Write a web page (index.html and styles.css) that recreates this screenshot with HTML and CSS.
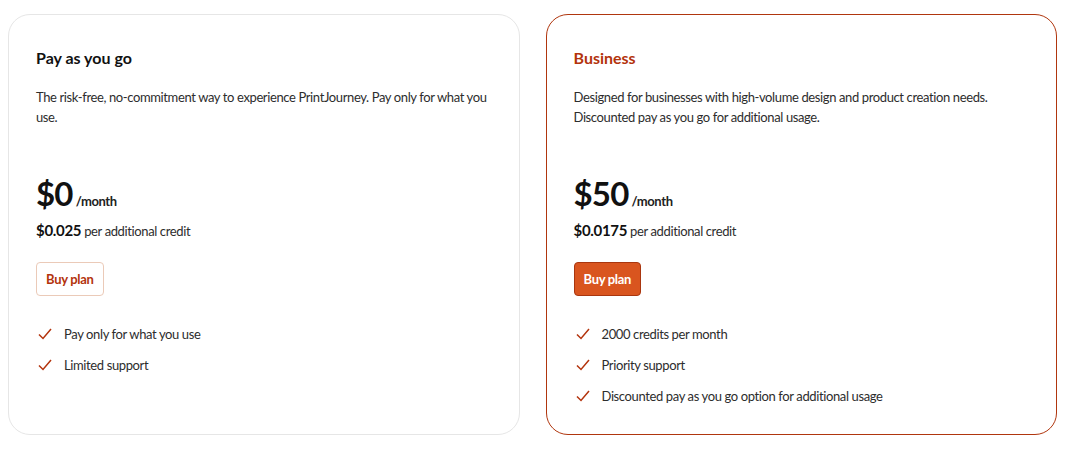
FILE: index.html
```html
<!DOCTYPE html>
<html lang="en">
<head>
<meta charset="utf-8">
<title>Plans</title>
<link rel="stylesheet" href="styles.css">
</head>
<body>
<main class="plans">
  <section class="card">
    <h2 class="title">Pay as you go</h2>
    <p class="desc">The risk-free, no-commitment way to experience PrintJourney. Pay only for what you use.</p>
    <div class="price"><span class="amount">$0</span><span class="period">/month</span></div>
    <div class="extra"><b>$0.025</b> per additional credit</div>
    <button class="btn btn-outline">Buy plan</button>
    <ul class="features">
      <li><svg class="check" viewBox="0 0 14 12"><path d="M1 6.5 L5 10.5 L13 1"/></svg>Pay only for what you use</li>
      <li><svg class="check" viewBox="0 0 14 12"><path d="M1 6.5 L5 10.5 L13 1"/></svg>Limited support</li>
    </ul>
  </section>
  <section class="card card-featured">
    <h2 class="title title-accent">Business</h2>
    <p class="desc">Designed for businesses with high-volume design and product creation needs. Discounted pay as you go for additional usage.</p>
    <div class="price"><span class="amount">$50</span><span class="period">/month</span></div>
    <div class="extra"><b>$0.0175</b> per additional credit</div>
    <button class="btn btn-fill">Buy plan</button>
    <ul class="features">
      <li><svg class="check" viewBox="0 0 14 12"><path d="M1 6.5 L5 10.5 L13 1"/></svg>2000 credits per month</li>
      <li><svg class="check" viewBox="0 0 14 12"><path d="M1 6.5 L5 10.5 L13 1"/></svg>Priority support</li>
      <li><svg class="check" viewBox="0 0 14 12"><path d="M1 6.5 L5 10.5 L13 1"/></svg>Discounted pay as you go option for additional usage</li>
    </ul>
  </section>
</main>
</body>
</html>
```
FILE: styles.css
```css
* { box-sizing: border-box; }
html, body { margin: 0; padding: 0; background: #fff; }
body {
  font-family: "Lato", "Open Sans", sans-serif;
  color: #1b1b1b;
}
.plans {
  display: flex;
  gap: 26px;
  padding: 14px 13px 0 8px;
}
.card {
  flex: 1;
  height: 421px;
  border: 1px solid #e6e6e6;
  border-radius: 22px;
  padding: 32px 27px 0 27px;
  display: flex;
  flex-direction: column;
  align-items: flex-start;
}
.card-featured { border: 1.5px solid #b0360e; }
.title {
  margin: 0;
  font-size: 16px;
  font-weight: 700;
  line-height: 22px;
  color: #111;
}
.title-accent { color: #b3330c; }
.desc {
  margin: 18px 0 0;
  font-size: 13px;
  letter-spacing: -0.38px;
  line-height: 20px;
  color: #2d2d2d;
  height: 40px;
}
.price {
  margin-top: 46px;
  display: flex;
  align-items: baseline;
  gap: 3px;
}
.amount {
  font-size: 33px;
  font-weight: 700;
  line-height: 40px;
  color: #111;
  letter-spacing: -0.8px;
}
.period {
  font-size: 13px;
  font-weight: 700;
  letter-spacing: -0.4px;
  color: #222;
}
.extra {
  margin-top: 7px;
  font-size: 13px;
  letter-spacing: -0.38px;
  line-height: 20px;
  color: #2d2d2d;
}
.extra b { font-size: 15px; font-weight: 700; color: #111; letter-spacing: -0.3px; }
.btn {
  margin-top: 21px;
  height: 34px;
  padding: 0 9px;
  border-radius: 4px;
  font-family: inherit;
  font-size: 13px;
  font-weight: 700;
  letter-spacing: -0.3px;
  cursor: pointer;
}
.btn-outline {
  background: #fff;
  border: 1px solid #ebcab8;
  color: #b3330c;
}
.btn-fill {
  background: #d9551f;
  border: 1px solid #a9360f;
  color: #fff;
}
.features {
  list-style: none;
  margin: 28px 0 0;
  padding: 0;
  display: flex;
  flex-direction: column;
  gap: 11px;
}
.features li {
  display: flex;
  align-items: center;
  font-size: 13px;
  letter-spacing: -0.38px;
  line-height: 20px;
  color: #2d2d2d;
}
.check {
  width: 14px;
  height: 12px;
  margin: 0 12px 0 2px;
  fill: none;
  stroke: #b3330c;
  stroke-width: 1.5;
}
```
